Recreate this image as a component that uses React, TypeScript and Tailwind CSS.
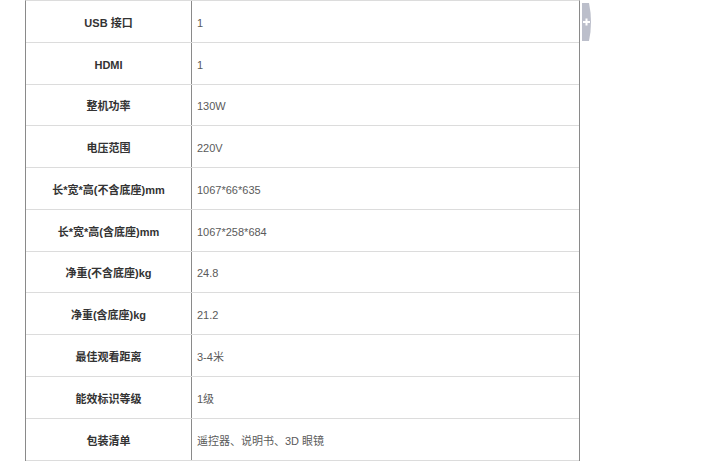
import React from 'react';

const rows = [
  { label: 'USB 接口', value: '1', h: 'h-[42px]' },
  { label: 'HDMI', value: '1', h: 'h-[42px]' },
  { label: '整机功率', value: '130W', h: 'h-[41px]' },
  { label: '电压范围', value: '220V', h: 'h-[42px]' },
  { label: '长*宽*高(不含底座)mm', value: '1067*66*635', h: 'h-[42px]' },
  { label: '长*宽*高(含底座)mm', value: '1067*258*684', h: 'h-[42px]' },
  { label: '净重(不含底座)kg', value: '24.8', h: 'h-[41px]' },
  { label: '净重(含底座)kg', value: '21.2', h: 'h-[42px]' },
  { label: '最佳观看距离', value: '3-4米', h: 'h-[42px]' },
  { label: '能效标识等级', value: '1级', h: 'h-[42px]' },
  { label: '包装清单', value: '遥控器、说明书、3D 眼镜', h: 'h-[42px]' },
];

const font = { fontFamily: '"Liberation Sans", "Noto Sans CJK SC", sans-serif' };

const App = () => {
  return (
    <div className="w-[701px] h-[461px] bg-white overflow-hidden flex items-start" style={font}>
      <div className="ml-[25px] w-[555px] border-x border-[#8a8a8a] border-t border-t-[#dcdcdc]">
        {rows.map((row, i) => (
          <div key={i} className={`flex ${row.h} border-b border-[#dcdcdc]`}>
            <div className="w-[165px] flex items-center justify-center pt-[3px] text-[11px] font-bold text-[#333]">
              {row.label}
            </div>
            <div className="flex-1 flex items-center pl-[5px] pt-[3px] border-l border-[#8a8a8a] text-[11px] text-[#5a5a5a]">
              {row.value}
            </div>
          </div>
        ))}
      </div>
      <div className="mt-[3px] ml-[2px]">
        <svg width="10" height="38" viewBox="0 0 10 38">
          <path d="M0 0 H7 Q11 19 7 38 H0 Z" fill="#bcbfcb" />
          <rect x="1" y="18" width="7" height="2" fill="#fff" />
          <rect x="3.5" y="15.5" width="2" height="7" fill="#fff" />
        </svg>
      </div>
    </div>
  );
};

export default App;
